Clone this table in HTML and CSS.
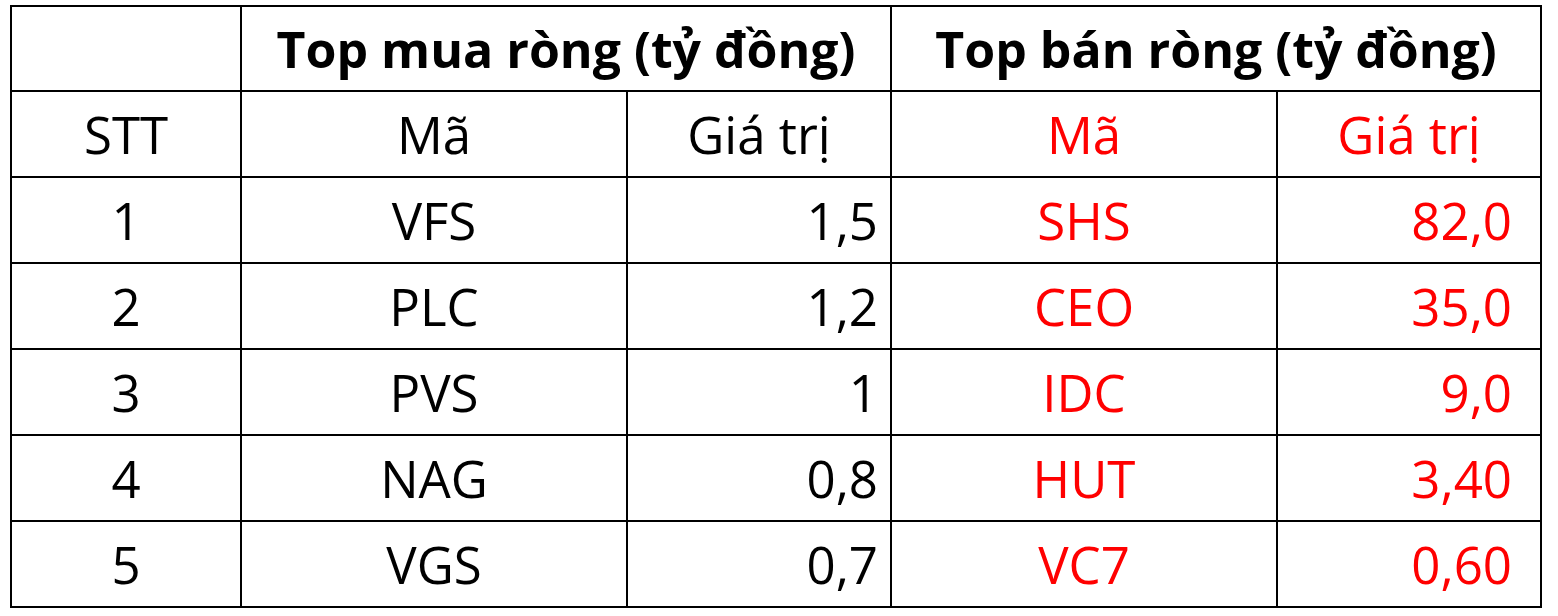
FILE: index.html
```html
<!DOCTYPE html>
<html lang="vi">
<head>
    <meta charset="UTF-8">
    <title>Top mua bán ròng</title>
    <link rel="stylesheet" href="styles.css">
</head>
<body>

<div class="wrap">
    <table class="trade-table">
        <colgroup>
            <col class="col-stt">
            <col class="col-code">
            <col class="col-val">
            <col class="col-code">
            <col class="col-val">
        </colgroup>
        <tr class="head">
            <td></td>
            <td colspan="2">Top mua ròng (tỷ đồng)</td>
            <td colspan="2">Top bán ròng (tỷ đồng)</td>
        </tr>
        <tr>
            <td>STT</td>
            <td>Mã</td>
            <td>Giá trị</td>
            <td class="red">Mã</td>
            <td class="red">Giá trị</td>
        </tr>
        <tr>
            <td>1</td>
            <td>VFS</td>
            <td class="num">1,5</td>
            <td class="red">SHS</td>
            <td class="red num-sell">82,0</td>
        </tr>
        <tr>
            <td>2</td>
            <td>PLC</td>
            <td class="num">1,2</td>
            <td class="red">CEO</td>
            <td class="red num-sell">35,0</td>
        </tr>
        <tr>
            <td>3</td>
            <td>PVS</td>
            <td class="num">1</td>
            <td class="red">IDC</td>
            <td class="red num-sell">9,0</td>
        </tr>
        <tr>
            <td>4</td>
            <td>NAG</td>
            <td class="num">0,8</td>
            <td class="red">HUT</td>
            <td class="red num-sell">3,40</td>
        </tr>
        <tr>
            <td>5</td>
            <td>VGS</td>
            <td class="num">0,7</td>
            <td class="red">VC7</td>
            <td class="red num-sell">0,60</td>
        </tr>
    </table>
</div>

</body>
</html>
```

FILE: styles.css
```css
* {
    margin: 0;
    padding: 0;
    box-sizing: border-box;
}

body {
    background: #fff;
    font-family: "Open Sans", "Noto Sans", sans-serif;
    color: #000;
}

.wrap {
    padding: 5px 0 0 10px;
}

.trade-table {
    border-collapse: collapse;
    table-layout: fixed;
    width: 1532px;
}

.col-stt {
    width: 230px;
}

.col-code {
    width: 386px;
}

.col-val {
    width: 264px;
}

.trade-table td {
    border: 2px solid #000;
    height: 86px;
    text-align: center;
    vertical-align: middle;
    font-size: 51px;
    line-height: 1;
    white-space: nowrap;
}

.trade-table .head td {
    font-weight: 700;
    font-size: 50px;
    height: 85px;
}

.trade-table .red {
    color: #ff0000;
}

.trade-table .num {
    text-align: right;
    padding-right: 12px;
}

.trade-table .num-sell {
    text-align: right;
    padding-right: 28px;
}
```
